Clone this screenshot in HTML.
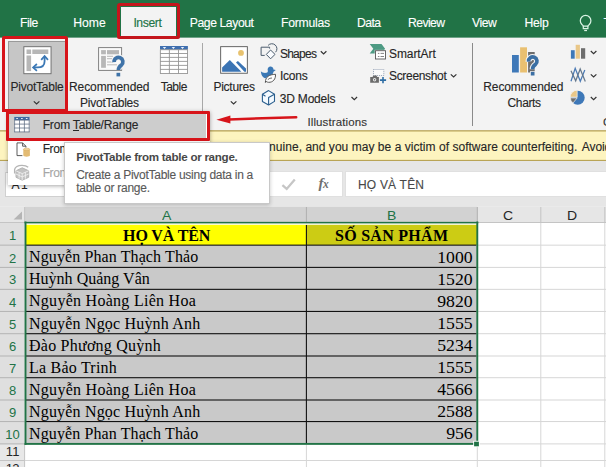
<!DOCTYPE html>
<html><head><meta charset="utf-8"><title>Excel</title>
<style>
html,body{margin:0;padding:0;}
body{width:606px;height:467px;overflow:hidden;position:relative;background:#e6e6e6;font-family:"Liberation Sans",sans-serif;}
.a{position:absolute;}
.t{position:absolute;white-space:nowrap;line-height:1;-webkit-text-stroke:0.12px currentColor;}
</style></head><body>
<!-- ===== title/tab strip ===== -->
<div class="a" style="left:0;top:0;width:606px;height:37px;background:#217346;"></div>
<div class="a" id="greenedge" style="left:0;top:37px;width:606px;height:1px;background:#6ea287;"></div>
<!-- ribbon body -->
<div class="a" style="left:0;top:38px;width:606px;height:93px;background:#f3f3f3;"></div>
<!-- Insert tab (active) -->
<div class="a" style="left:121px;top:7px;width:55px;height:31px;background:#f3f3f3;"></div>
<!-- lightbulb -->
<svg class="a" style="left:576px;top:10px;" width="20" height="24" viewBox="576 10 20 24" fill="none" stroke="#d9f2e3" stroke-width="1.25">
 <path d="M583.300 26.300C583.200 25.600 582.600 25.200 581.900 24.500A5.300 5.300 0 1 1 589.300 24.500C588.600 25.200 588 25.600 587.900 26.300"/>
 <path d="M583.300 26.200H587.900V28.700H583.300z"/>
 <path d="M584.200 30.500H587"/>
</svg>
<!-- group separators -->
<div class="a" style="left:202px;top:43px;width:1px;height:83px;background:#a8a8a8;"></div>
<div class="a" style="left:472px;top:43px;width:1px;height:83px;background:#8a8a8a;"></div>

<!-- PivotTable pressed button bg -->
<div class="a" style="left:8px;top:41px;width:57px;height:68px;background:#c6c6c6;box-shadow:inset 1px 1px 0 #999;"></div>

<!-- ICONS -->
<svg class="a" style="left:0;top:36px;" width="606" height="95" viewBox="0 36 606 95">
<!-- PivotTable icon -->
<g transform="translate(18.400,42.400)">
 <rect x="5.45" y="4.3" width="27.2" height="27" fill="#fff" stroke="#6e6e6e" stroke-width="0.95"/>
 <rect x="8.1" y="7.1" width="4.6" height="4.5" fill="#b7b7b7"/>
 <rect x="13.9" y="7.1" width="16" height="4.5" fill="#b7b7b7"/>
 <rect x="8.1" y="13.1" width="4.6" height="15.6" fill="#b7b7b7"/>
 <path d="M26.200 14.400V18.800C26.200 23.300 23.600 25 19.200 25H15.200" fill="none" stroke="#3b78b5" stroke-width="1.800"/>
 <path d="M22.800 17.400L26.200 13.700L29.600 17.400" fill="none" stroke="#3b78b5" stroke-width="1.700"/>
 <path d="M18.500 21.600L14.700 25L18.500 28.400" fill="none" stroke="#3b78b5" stroke-width="1.700"/>
</g>
<!-- Recommended PivotTables icon -->
<g transform="translate(92,42)">
 <rect x="6.6" y="5.6" width="23" height="22.8" fill="#fafafa" stroke="#7d7d7d" stroke-width="0.95"/>
 <rect x="9.1" y="8.1" width="4.8" height="4.2" fill="#b7b7b7"/>
 <rect x="15" y="8.1" width="12" height="4.2" fill="#b7b7b7"/>
 <rect x="9.1" y="13.9" width="4.8" height="11.9" fill="#b7b7b7"/>
 <path d="M15 14.300h6M15 16.700h5M15 20h6M15 22.800h10" stroke="#a8a8a8" stroke-width="0.800" fill="none"/>
 <g transform="translate(-0.200,0.700)">
 <g fill="none" stroke="#f3f3f3" stroke-width="5.800"><path d="M22.300 19.400A4.400 4.400 0 1 1 29.600 22.400Q26.600 24.400 26.600 27.400"/></g>
 <rect x="23.9" y="29.5" width="5.4" height="5.200" fill="#f3f3f3"/>
 <path d="M22.300 19.400A4.400 4.400 0 1 1 29.600 22.400Q26.600 24.400 26.600 27.400" fill="none" stroke="#3f73a8" stroke-width="3.700"/>
 <rect x="24.700" y="30.100" width="3.700" height="3.600" fill="#3f73a8"/>
 </g>
</g>
<!-- Table icon -->
<g transform="translate(154,42)">
 <rect x="6" y="4" width="27.9" height="27.7" fill="#fff"/>
 <rect x="6" y="4" width="27.9" height="3.7" fill="#3f6faf"/>
 <path d="M8.800 5.100h3.400l-1.700 2zM17.700 5.100h3.400l-1.700 2zM26.800 5.100h3.400l-1.700 2z" fill="#eaf4ff"/>
 <path d="M6 7.700h27.900M6 11.500h27.900M6 15.400h27.900M6 19.400h27.900M6 23.400h27.900M6 27.400h27.900M6 31.500h27.900M6.400 7.700v24M15.400 7.700v24M24.500 7.700v24M33.500 7.700v24" stroke="#959595" stroke-width="0.900" fill="none"/>
</g>
<!-- Pictures icon -->
<g transform="translate(214,42)">
 <rect x="6.65" y="4.65" width="26.7" height="26.6" fill="#fff" stroke="#5e5e5e" stroke-width="0.95"/>
 <circle cx="27" cy="10.9" r="2.9" fill="#e8c26e"/>
 <path d="M8.100 29.700V25.400L15.800 18.100L27.400 29.700z" fill="#3b74b4"/>
 <path d="M22 20.400L23.900 18.900L32 26.600V29.700H30.400z" fill="#3b74b4"/>
</g>
<!-- Shapes icon -->
<g transform="translate(256,40)" fill="none" stroke="#4a5b6c" stroke-width="1">
 <path d="M8.700 15.400H5.100V7.200H13.600V8.600"/>
 <path d="M12.100 5.400A4.600 4.600 0 1 1 19.600 12.200"/>
 <path d="M14.600 10L19 14.400L14.600 18.800L10.300 14.400z" fill="#fafcff"/>
</g>
<!-- Icons icon (duck + leaf) -->
<g transform="translate(256,62)">
 <path d="M4.900 9.300C6 10.600 8.200 11.100 10.400 10.800C11.700 10.500 12 9.500 11.800 8.400A2.900 2.900 0 1 1 17.400 7.600L19.800 8.100L17.500 9.700C17.200 12 15.500 13.500 13 14.500L9.500 16.300C6.800 15.800 5 13 4.900 9.300z" fill="#3b78b5"/>
 <path d="M9.400 20.500C9.300 15 13 12.500 19.500 12.300C19.900 17 17 20.600 12.500 20.300C11 20.200 10.200 19.600 9.900 19z" fill="#fdfdfd" stroke="#4a4a4a" stroke-width="0.900"/>
 <path d="M11.800 17.600Q13.800 15.800 16 16" fill="none" stroke="#4a4a4a" stroke-width="0.800"/>
</g>
<!-- 3D Models icon -->
<g transform="translate(256,86)" fill="none" stroke="#2b5f8e" stroke-width="1.100" stroke-linejoin="round">
 <path d="M12.600 4.600L18.500 8.200V15.400L12.600 19L6.400 15.400V8.200z" fill="#f4faff"/>
 <path d="M12.600 19V11.600L18.500 8.200M6.400 8.200L9.500 10.200"/>
</g>
<!-- SmartArt icon -->
<g transform="translate(364,40)">
 <path d="M5.700 4.100H17.500L21.100 8.700L17.500 13.400H5.700L9.300 8.700z" fill="#4d9a83"/>
 <rect x="10.700" y="9.900" width="11.500" height="9.800" fill="#f3f3f3"/>
 <rect x="11.500" y="10.700" width="10" height="8.300" fill="#fff" stroke="#555" stroke-width="0.900"/>
 <path d="M13.900 13.400h1.500M16.500 13.400h3.500M13.900 16.500h1.500M16.500 16.500h3.500" stroke="#777" stroke-width="0.900"/>
</g>
<!-- Screenshot icon -->
<g transform="translate(364,40)">
 <rect x="9.500" y="29.500" width="10.300" height="6" fill="#fafafa" stroke="#8c9bb0" stroke-width="0.900" stroke-dasharray="1 1"/>
 <path d="M6.200 36.900h2.300l0.900-1.400h3l0.900 1.400h1.600v5.800H6.200z" fill="#6b6b6b"/>
 <circle cx="10.600" cy="39.700" r="1.700" fill="#e6e6e6"/>
 <circle cx="10.600" cy="39.700" r="0.700" fill="#6b6b6b"/>
 <path d="M19 37v6.200M15.900 40.100h6.200" stroke="#2e6da4" stroke-width="1.600" fill="none"/>
</g>
<!-- Recommended Charts icon -->
<g transform="translate(506,40)">
 <rect x="6" y="15" width="6.800" height="17.500" fill="#3e78b8"/>
 <rect x="14.100" y="7.300" width="6.900" height="25.200" fill="#e9c071"/>
 <rect x="22.100" y="12" width="6.600" height="20.500" fill="#6d6d6d"/>
 <g fill="none" stroke="#f3f3f3" stroke-width="6"><path d="M22.600 21.600A4.200 4.200 0 1 1 29.500 24.400Q26.600 26.300 26.600 29.300"/></g>
 <rect x="24" y="31.200" width="5.200" height="5.200" fill="#f3f3f3"/>
 <path d="M22.600 21.600A4.200 4.200 0 1 1 29.500 24.400Q26.600 26.300 26.600 29.300" fill="none" stroke="#3b6fa3" stroke-width="3.700"/>
 <rect x="24.800" y="31.900" width="3.700" height="3.600" fill="#3b6fa3"/>
</g>
<!-- small chart icons -->
<g transform="translate(566,40)">
 <rect x="4.900" y="10.200" width="3.800" height="8.500" fill="#3e78b8"/>
 <rect x="9.700" y="4.800" width="4.200" height="13.900" fill="#e9c788"/>
 <rect x="15" y="8.200" width="4.200" height="10.500" fill="#6d6d6d"/>
 <path d="M5 41.200L9.200 28.300L14.300 41.200L18.800 30" fill="none" stroke="#4a7ab5" stroke-width="1.250"/>
 <path d="M5 30.700L9.700 40.800L14.200 29L19.300 41.400" fill="none" stroke="#66788c" stroke-width="1.250"/>
 <circle cx="11.700" cy="57.700" r="7" fill="#3e78b8"/>
 <path d="M11.200 57.200V50.200A7 7 0 0 0 4.200 57.200z" fill="#e9c788" stroke="#f3f3f3" stroke-width="0.700"/>
 <path d="M11.200 57.900H4.300A7 7 0 0 0 7 63z" fill="#6d6d6d" stroke="#f3f3f3" stroke-width="0.700"/>
</g>
<!-- chevrons -->
<g fill="none" stroke="#333" stroke-width="1.200">
 <path d="M33.800 101.400l2.800 2.600l2.800-2.600"/>
 <path d="M230.800 101.400l2.800 2.600l2.800-2.600"/>
 <path d="M320.800 51.300l2.800 2.600l2.800-2.600"/>
 <path d="M351.500 97l2.800 2.600l2.800-2.600"/>
 <path d="M450.800 74.400l2.800 2.600l2.800-2.600"/>
 <path d="M590.800 51l2.800 2.600l2.800-2.600"/>
 <path d="M590.800 74.400l2.800 2.600l2.800-2.600"/>
 <path d="M590.800 97l2.800 2.600l2.800-2.600"/>
</g>
</svg>
<!-- /ICONS -->
<!-- ===== message bar (yellow) ===== -->
<svg class="a" style="left:0;top:129px;" width="606" height="34" viewBox="0 129 606 34">
 <rect x="0" y="130.2" width="606" height="31" fill="#b9a455"/>
 <rect x="0" y="131.5" width="606" height="28.35" fill="#fdf4bf"/>
</svg>
<!-- ===== formula bar ===== -->
<div class="a" style="left:0;top:161px;width:606px;height:46px;background:#e6e6e6;"></div>
<div class="a" style="left:5.4px;top:171.5px;width:150px;height:25px;background:#fff;border:1px solid #d0d0d0;box-sizing:border-box;"></div>
<div class="a" style="left:160px;top:171px;width:183.4px;height:26px;background:#fff;box-shadow:inset 0 0 0 1px #e0e0e0;"></div>
<div class="a" style="left:345px;top:171px;width:264px;height:26px;background:#fff;box-shadow:inset 0 0 0 1px #e0e0e0;"></div>
<!-- checkmark -->
<svg class="a" style="left:279px;top:176px;" width="18" height="16" viewBox="279 176 18 16"><path d="M282.400 185.200l4.300 3.700L294.800 179.600" fill="none" stroke="#c6c6c6" stroke-width="2.300"/></svg>
<!-- fx -->
<div class="t" style="left:318.4px;top:175.600px;font-family:'Liberation Serif',serif;font-style:italic;font-weight:bold;font-size:15px;color:#707070;-webkit-text-stroke:0;letter-spacing:-0.300px;">f<span style="font-size:11.500px;">x</span></div>

<!-- ===== sheet ===== -->
<svg class="a" style="left:0;top:200px;" width="606" height="267" viewBox="0 200 606 267">
<rect x="0.00" y="206.80" width="606.00" height="261.00" fill="#ffffff"/>
<rect x="0.00" y="206.80" width="606.00" height="16.20" fill="#e6e6e6"/>
<rect x="25.00" y="206.80" width="452.30" height="16.20" fill="#d2d2d2"/>
<rect x="0.00" y="223.00" width="24.60" height="244.00" fill="#e8e8e8"/>
<rect x="0.00" y="223.00" width="24.60" height="220.90" fill="#dfdfdf"/>
<path d="M22 211.600V219.400H13.600z" fill="#b4b4b4"/>
<rect x="24.10" y="207.00" width="1.00" height="16.00" fill="#c4c4c4"/>
<rect x="305.90" y="207.00" width="1.00" height="16.00" fill="#b0b0b0"/>
<rect x="476.80" y="207.00" width="1.00" height="16.00" fill="#b0b0b0"/>
<rect x="540.30" y="207.00" width="1.00" height="16.00" fill="#c4c4c4"/>
<rect x="604.30" y="207.00" width="1.00" height="16.00" fill="#c4c4c4"/>
<rect x="477.30" y="222.00" width="129.00" height="1.00" fill="#c4c4c4"/>
<rect x="0.00" y="222.00" width="24.60" height="1.00" fill="#c4c4c4"/>
<rect x="0.00" y="244.65" width="24.60" height="1.00" fill="#b4b4b4"/>
<rect x="0.00" y="266.90" width="24.60" height="1.00" fill="#b4b4b4"/>
<rect x="0.00" y="288.85" width="24.60" height="1.00" fill="#b4b4b4"/>
<rect x="0.00" y="310.95" width="24.60" height="1.00" fill="#b4b4b4"/>
<rect x="0.00" y="333.20" width="24.60" height="1.00" fill="#b4b4b4"/>
<rect x="0.00" y="355.50" width="24.60" height="1.00" fill="#b4b4b4"/>
<rect x="0.00" y="377.20" width="24.60" height="1.00" fill="#b4b4b4"/>
<rect x="0.00" y="399.50" width="24.60" height="1.00" fill="#b4b4b4"/>
<rect x="0.00" y="421.05" width="24.60" height="1.00" fill="#b4b4b4"/>
<rect x="0.00" y="443.40" width="24.60" height="1.00" fill="#b4b4b4"/>
<rect x="0.00" y="460.00" width="24.60" height="1.00" fill="#c4c4c4"/>
<rect x="24.10" y="443.90" width="1.00" height="30.00" fill="#c4c4c4"/>
<rect x="478.00" y="244.65" width="128.00" height="1.00" fill="#d6d6d6"/>
<rect x="478.00" y="266.90" width="128.00" height="1.00" fill="#d6d6d6"/>
<rect x="478.00" y="288.85" width="128.00" height="1.00" fill="#d6d6d6"/>
<rect x="478.00" y="310.95" width="128.00" height="1.00" fill="#d6d6d6"/>
<rect x="478.00" y="333.20" width="128.00" height="1.00" fill="#d6d6d6"/>
<rect x="478.00" y="355.50" width="128.00" height="1.00" fill="#d6d6d6"/>
<rect x="478.00" y="377.20" width="128.00" height="1.00" fill="#d6d6d6"/>
<rect x="478.00" y="399.50" width="128.00" height="1.00" fill="#d6d6d6"/>
<rect x="478.00" y="421.05" width="128.00" height="1.00" fill="#d6d6d6"/>
<rect x="478.00" y="443.40" width="128.00" height="1.00" fill="#d6d6d6"/>
<rect x="25.00" y="460.00" width="581.00" height="1.00" fill="#d6d6d6"/>
<rect x="305.90" y="444.90" width="1.00" height="30.00" fill="#d6d6d6"/>
<rect x="476.80" y="444.90" width="1.00" height="30.00" fill="#d6d6d6"/>
<rect x="540.30" y="223.00" width="1.00" height="244.00" fill="#d6d6d6"/>
<rect x="604.30" y="223.00" width="1.00" height="244.00" fill="#d6d6d6"/>
<rect x="25.50" y="224.50" width="280.90" height="20.65" fill="#ffff00"/>
<rect x="306.40" y="224.50" width="170.90" height="20.65" fill="#cccc14"/>
<rect x="25.50" y="245.15" width="451.80" height="198.75" fill="#c9c9c9"/>
<rect x="26.00" y="244.60" width="450.50" height="1.10" fill="#111111"/>
<rect x="26.00" y="266.85" width="450.50" height="1.10" fill="#111111"/>
<rect x="26.00" y="288.80" width="450.50" height="1.10" fill="#111111"/>
<rect x="26.00" y="310.90" width="450.50" height="1.10" fill="#111111"/>
<rect x="26.00" y="333.15" width="450.50" height="1.10" fill="#111111"/>
<rect x="26.00" y="355.45" width="450.50" height="1.10" fill="#111111"/>
<rect x="26.00" y="377.15" width="450.50" height="1.10" fill="#111111"/>
<rect x="26.00" y="399.45" width="450.50" height="1.10" fill="#111111"/>
<rect x="26.00" y="421.00" width="450.50" height="1.10" fill="#111111"/>
<rect x="305.85" y="224.90" width="1.10" height="219.00" fill="#111111"/>
<rect x="26.50" y="223.30" width="449.80" height="1.40" fill="#fbfbe8"/>
<rect x="24.55" y="221.50" width="1.90" height="223.35" fill="#217346"/>
<rect x="476.35" y="221.50" width="1.90" height="223.35" fill="#217346"/>
<rect x="24.55" y="442.95" width="453.70" height="1.90" fill="#217346"/>
<rect x="24.55" y="221.85" width="453.70" height="1.55" fill="#217346"/>
<rect x="473.20" y="440.80" width="6.60" height="6.40" fill="#ffffff"/>
<rect x="474.10" y="441.70" width="4.80" height="4.60" fill="#217346"/>
</svg>
<div class="t" id="t0" style="left:20.00px;top:16.67px;font-size:12.20px;color:#ffffff;font-family:'Liberation Sans', sans-serif;font-weight:normal;letter-spacing:-0.480px;">File</div>
<div class="t" id="t1" style="left:73.20px;top:16.67px;font-size:12.20px;color:#ffffff;font-family:'Liberation Sans', sans-serif;font-weight:normal;letter-spacing:0.028px;">Home</div>
<div class="t" id="t2" style="left:133.40px;top:16.67px;font-size:12.20px;color:#217346;font-family:'Liberation Sans', sans-serif;font-weight:normal;letter-spacing:-0.417px;">Insert</div>
<div class="t" id="t3" style="left:189.80px;top:16.67px;font-size:12.20px;color:#ffffff;font-family:'Liberation Sans', sans-serif;font-weight:normal;letter-spacing:-0.425px;">Page Layout</div>
<div class="t" id="t4" style="left:281.00px;top:16.67px;font-size:12.20px;color:#ffffff;font-family:'Liberation Sans', sans-serif;font-weight:normal;letter-spacing:-0.257px;">Formulas</div>
<div class="t" id="t5" style="left:357.00px;top:16.67px;font-size:12.20px;color:#ffffff;font-family:'Liberation Sans', sans-serif;font-weight:normal;letter-spacing:-0.583px;">Data</div>
<div class="t" id="t6" style="left:408.00px;top:16.67px;font-size:12.20px;color:#ffffff;font-family:'Liberation Sans', sans-serif;font-weight:normal;letter-spacing:-0.594px;">Review</div>
<div class="t" id="t7" style="left:472.00px;top:16.67px;font-size:12.20px;color:#ffffff;font-family:'Liberation Sans', sans-serif;font-weight:normal;letter-spacing:-0.468px;">View</div>
<div class="t" id="t8" style="left:524.60px;top:16.67px;font-size:12.20px;color:#ffffff;font-family:'Liberation Sans', sans-serif;font-weight:normal;letter-spacing:-0.293px;">Help</div>
<div class="t" id="t9" style="left:603.50px;top:16.67px;font-size:12.20px;color:#ffffff;font-family:'Liberation Sans', sans-serif;font-weight:normal;letter-spacing:0.000px;">T</div>
<div class="t" id="t10" style="left:10.50px;top:81.34px;font-size:12.00px;color:#262626;font-family:'Liberation Sans', sans-serif;font-weight:normal;letter-spacing:-0.231px;">PivotTable</div>
<div class="t" id="t11" style="left:69.00px;top:81.34px;font-size:12.00px;color:#262626;font-family:'Liberation Sans', sans-serif;font-weight:normal;letter-spacing:-0.087px;">Recommended</div>
<div class="t" id="t12" style="left:80.00px;top:97.14px;font-size:12.00px;color:#262626;font-family:'Liberation Sans', sans-serif;font-weight:normal;letter-spacing:-0.237px;">PivotTables</div>
<div class="t" id="t13" style="left:160.70px;top:81.34px;font-size:12.00px;color:#262626;font-family:'Liberation Sans', sans-serif;font-weight:normal;letter-spacing:-0.497px;">Table</div>
<div class="t" id="t14" style="left:213.40px;top:81.34px;font-size:12.00px;color:#262626;font-family:'Liberation Sans', sans-serif;font-weight:normal;letter-spacing:-0.251px;">Pictures</div>
<div class="t" id="t15" style="left:279.90px;top:47.84px;font-size:12.00px;color:#262626;font-family:'Liberation Sans', sans-serif;font-weight:normal;letter-spacing:-0.741px;">Shapes</div>
<div class="t" id="t16" style="left:279.90px;top:70.14px;font-size:12.00px;color:#262626;font-family:'Liberation Sans', sans-serif;font-weight:normal;letter-spacing:-0.197px;">Icons</div>
<div class="t" id="t17" style="left:279.70px;top:93.24px;font-size:12.00px;color:#262626;font-family:'Liberation Sans', sans-serif;font-weight:normal;letter-spacing:-0.182px;">3D Models</div>
<div class="t" id="t18" style="left:389.00px;top:47.84px;font-size:12.00px;color:#262626;font-family:'Liberation Sans', sans-serif;font-weight:normal;letter-spacing:-0.078px;">SmartArt</div>
<div class="t" id="t19" style="left:389.00px;top:70.44px;font-size:12.00px;color:#262626;font-family:'Liberation Sans', sans-serif;font-weight:normal;letter-spacing:-0.323px;">Screenshot</div>
<div class="t" id="t20" style="left:307.40px;top:116.87px;font-size:11.50px;color:#333333;font-family:'Liberation Sans', sans-serif;font-weight:normal;letter-spacing:0.119px;">Illustrations</div>
<div class="t" id="t21" style="left:483.30px;top:81.44px;font-size:12.00px;color:#262626;font-family:'Liberation Sans', sans-serif;font-weight:normal;letter-spacing:-0.118px;">Recommended</div>
<div class="t" id="t22" style="left:507.60px;top:97.24px;font-size:12.00px;color:#262626;font-family:'Liberation Sans', sans-serif;font-weight:normal;letter-spacing:-0.389px;">Charts</div>
<div class="t" id="t23" style="left:603.00px;top:116.87px;font-size:11.50px;color:#333333;font-family:'Liberation Sans', sans-serif;font-weight:normal;letter-spacing:0.000px;">C</div>
<div class="t" id="t24" style="left:255.69px;top:141.14px;font-size:12.00px;color:#262626;font-family:'Liberation Sans', sans-serif;font-weight:normal;letter-spacing:0.035px;">genuine, and you may be a victim of software counterfeiting.</div>
<div class="t" id="t25" style="left:581.80px;top:141.14px;font-size:12.00px;color:#262626;font-family:'Liberation Sans', sans-serif;font-weight:normal;letter-spacing:-0.103px;">Avoid</div>
<div class="t" id="t26" style="left:11.50px;top:178.64px;font-size:12.00px;color:#262626;font-family:'Liberation Sans', sans-serif;font-weight:normal;letter-spacing:1.512px;">A1</div>
<div class="t" id="t27" style="left:358.00px;top:179.04px;font-size:12.00px;color:#484848;font-family:'Liberation Sans', sans-serif;font-weight:normal;letter-spacing:0.191px;">HỌ VÀ TÊN</div>
<div class="t" id="t28" style="left:161.98px;top:209.80px;font-size:12.40px;color:#217346;font-family:'Liberation Sans', sans-serif;font-weight:normal;transform:scaleX(1.1307);transform-origin:left center;-webkit-text-stroke:0;">A</div>
<div class="t" id="t29" style="left:386.93px;top:209.80px;font-size:12.40px;color:#217346;font-family:'Liberation Sans', sans-serif;font-weight:normal;transform:scaleX(1.1307);transform-origin:left center;-webkit-text-stroke:0;">B</div>
<div class="t" id="t30" style="left:503.04px;top:209.80px;font-size:12.40px;color:#262626;font-family:'Liberation Sans', sans-serif;font-weight:normal;transform:scaleX(1.1300);transform-origin:left center;-webkit-text-stroke:0;">C</div>
<div class="t" id="t31" style="left:567.14px;top:209.80px;font-size:12.40px;color:#262626;font-family:'Liberation Sans', sans-serif;font-weight:normal;transform:scaleX(1.1300);transform-origin:left center;-webkit-text-stroke:0;">D</div>
<div class="t" id="t32" style="left:8.98px;top:229.25px;font-size:13.00px;color:#217346;font-family:'Liberation Sans', sans-serif;font-weight:normal;letter-spacing:0.000px;-webkit-text-stroke:0;">1</div>
<div class="t" id="t33" style="left:8.98px;top:251.50px;font-size:13.00px;color:#217346;font-family:'Liberation Sans', sans-serif;font-weight:normal;letter-spacing:0.000px;-webkit-text-stroke:0;">2</div>
<div class="t" id="t34" style="left:8.98px;top:273.45px;font-size:13.00px;color:#217346;font-family:'Liberation Sans', sans-serif;font-weight:normal;letter-spacing:0.000px;-webkit-text-stroke:0;">3</div>
<div class="t" id="t35" style="left:8.98px;top:295.55px;font-size:13.00px;color:#217346;font-family:'Liberation Sans', sans-serif;font-weight:normal;letter-spacing:0.000px;-webkit-text-stroke:0;">4</div>
<div class="t" id="t36" style="left:8.98px;top:317.80px;font-size:13.00px;color:#217346;font-family:'Liberation Sans', sans-serif;font-weight:normal;letter-spacing:0.000px;-webkit-text-stroke:0;">5</div>
<div class="t" id="t37" style="left:8.98px;top:340.10px;font-size:13.00px;color:#217346;font-family:'Liberation Sans', sans-serif;font-weight:normal;letter-spacing:0.000px;-webkit-text-stroke:0;">6</div>
<div class="t" id="t38" style="left:8.98px;top:361.80px;font-size:13.00px;color:#217346;font-family:'Liberation Sans', sans-serif;font-weight:normal;letter-spacing:0.000px;-webkit-text-stroke:0;">7</div>
<div class="t" id="t39" style="left:8.98px;top:384.10px;font-size:13.00px;color:#217346;font-family:'Liberation Sans', sans-serif;font-weight:normal;letter-spacing:0.000px;-webkit-text-stroke:0;">8</div>
<div class="t" id="t40" style="left:8.98px;top:405.65px;font-size:13.00px;color:#217346;font-family:'Liberation Sans', sans-serif;font-weight:normal;letter-spacing:0.000px;-webkit-text-stroke:0;">9</div>
<div class="t" id="t41" style="left:5.37px;top:428.00px;font-size:13.00px;color:#217346;font-family:'Liberation Sans', sans-serif;font-weight:normal;letter-spacing:-0.009px;-webkit-text-stroke:0;">10</div>
<div class="t" id="t42" style="left:5.80px;top:445.00px;font-size:13.00px;color:#262626;font-family:'Liberation Sans', sans-serif;font-weight:normal;letter-spacing:0.300px;-webkit-text-stroke:0;">11</div>
<div class="t" id="t43" style="left:5.80px;top:462.00px;font-size:13.00px;color:#262626;font-family:'Liberation Sans', sans-serif;font-weight:normal;letter-spacing:-0.669px;-webkit-text-stroke:0;">12</div>
<div class="t" id="t44" style="left:123.10px;top:227.65px;font-size:16.00px;color:#000000;font-family:'Liberation Serif', serif;font-weight:bold;letter-spacing:-0.129px;-webkit-text-stroke:0;">HỌ VÀ TÊN</div>
<div class="t" id="t45" style="left:335.00px;top:227.65px;font-size:16.00px;color:#000000;font-family:'Liberation Serif', serif;font-weight:bold;letter-spacing:0.277px;-webkit-text-stroke:0;">SỐ SẢN PHẨM</div>
<div class="t" id="t46" style="left:29.00px;top:249.40px;font-size:16.00px;color:#000000;font-family:'Liberation Serif', serif;font-weight:normal;letter-spacing:0.108px;-webkit-text-stroke:0;">Nguyễn Phan Thạch Thảo</div>
<div class="t" id="t47" style="right:133.30px;top:249.57px;font-size:15.80px;color:#000000;font-family:'Liberation Serif', serif;font-weight:normal;transform:scaleX(1.1205);transform-origin:right center;-webkit-text-stroke:0;">1000</div>
<div class="t" id="t48" style="left:29.00px;top:271.35px;font-size:16.00px;color:#000000;font-family:'Liberation Serif', serif;font-weight:normal;letter-spacing:0.016px;-webkit-text-stroke:0;">Huỳnh Quảng Vân</div>
<div class="t" id="t49" style="right:133.30px;top:271.52px;font-size:15.80px;color:#000000;font-family:'Liberation Serif', serif;font-weight:normal;transform:scaleX(1.1205);transform-origin:right center;-webkit-text-stroke:0;">1520</div>
<div class="t" id="t50" style="left:29.00px;top:293.45px;font-size:16.00px;color:#000000;font-family:'Liberation Serif', serif;font-weight:normal;letter-spacing:0.275px;-webkit-text-stroke:0;">Nguyễn Hoàng Liên Hoa</div>
<div class="t" id="t51" style="right:133.30px;top:293.62px;font-size:15.80px;color:#000000;font-family:'Liberation Serif', serif;font-weight:normal;transform:scaleX(1.1205);transform-origin:right center;-webkit-text-stroke:0;">9820</div>
<div class="t" id="t52" style="left:29.00px;top:315.70px;font-size:16.00px;color:#000000;font-family:'Liberation Serif', serif;font-weight:normal;letter-spacing:0.183px;-webkit-text-stroke:0;">Nguyễn Ngọc Huỳnh Anh</div>
<div class="t" id="t53" style="right:133.30px;top:315.87px;font-size:15.80px;color:#000000;font-family:'Liberation Serif', serif;font-weight:normal;transform:scaleX(1.1205);transform-origin:right center;-webkit-text-stroke:0;">1555</div>
<div class="t" id="t54" style="left:29.00px;top:338.00px;font-size:16.00px;color:#000000;font-family:'Liberation Serif', serif;font-weight:normal;letter-spacing:0.237px;-webkit-text-stroke:0;">Đào Phương Quỳnh</div>
<div class="t" id="t55" style="right:133.30px;top:338.17px;font-size:15.80px;color:#000000;font-family:'Liberation Serif', serif;font-weight:normal;transform:scaleX(1.1205);transform-origin:right center;-webkit-text-stroke:0;">5234</div>
<div class="t" id="t56" style="left:29.00px;top:359.70px;font-size:16.00px;color:#000000;font-family:'Liberation Serif', serif;font-weight:normal;letter-spacing:0.223px;-webkit-text-stroke:0;">La Bảo Trinh</div>
<div class="t" id="t57" style="right:133.30px;top:359.87px;font-size:15.80px;color:#000000;font-family:'Liberation Serif', serif;font-weight:normal;transform:scaleX(1.1205);transform-origin:right center;-webkit-text-stroke:0;">1555</div>
<div class="t" id="t58" style="left:29.00px;top:382.00px;font-size:16.00px;color:#000000;font-family:'Liberation Serif', serif;font-weight:normal;letter-spacing:0.275px;-webkit-text-stroke:0;">Nguyễn Hoàng Liên Hoa</div>
<div class="t" id="t59" style="right:133.30px;top:382.17px;font-size:15.80px;color:#000000;font-family:'Liberation Serif', serif;font-weight:normal;transform:scaleX(1.1205);transform-origin:right center;-webkit-text-stroke:0;">4566</div>
<div class="t" id="t60" style="left:29.00px;top:403.55px;font-size:16.00px;color:#000000;font-family:'Liberation Serif', serif;font-weight:normal;letter-spacing:0.183px;-webkit-text-stroke:0;">Nguyễn Ngọc Huỳnh Anh</div>
<div class="t" id="t61" style="right:133.30px;top:403.72px;font-size:15.80px;color:#000000;font-family:'Liberation Serif', serif;font-weight:normal;transform:scaleX(1.1205);transform-origin:right center;-webkit-text-stroke:0;">2588</div>
<div class="t" id="t62" style="left:29.00px;top:425.90px;font-size:16.00px;color:#000000;font-family:'Liberation Serif', serif;font-weight:normal;letter-spacing:0.108px;-webkit-text-stroke:0;">Nguyễn Phan Thạch Thảo</div>
<div class="t" id="t63" style="right:133.30px;top:426.07px;font-size:15.80px;color:#000000;font-family:'Liberation Serif', serif;font-weight:normal;transform:scaleX(1.1201);transform-origin:right center;-webkit-text-stroke:0;">956</div>
<!-- dropdown menu -->
<div class="a" style="left:8px;top:111px;width:202px;height:74.4px;background:#fff;box-shadow:0 1px 4px rgba(0,0,0,.35);"></div>
<div class="a" style="left:9px;top:114px;width:197px;height:23.500px;background:#cdcdcd;"></div>
<svg class="a" style="left:8px;top:112px;" width="30" height="72" viewBox="0 0 30 72">
 <!-- table icon -->
 <rect x="6.2" y="4.9" width="15.4" height="15.1" fill="#fff"/>
 <rect x="6.2" y="4.9" width="15.4" height="3.2" fill="#3d6aa2"/>
 <path d="M8.300 6.500h1.600M13.100 6.500h1.600M17.900 6.500h1.600" stroke="#fff" stroke-width="0.900"/>
 <path d="M6.200 8.100h15.400M6.200 12.100h15.400M6.200 16h15.400M6.200 19.900h15.400M6.600 8.100v12M11.500 8.100v12M16.400 8.100v12M21.200 8.100v12" stroke="#5c6b80" stroke-width="0.750" fill="none"/>
 <!-- doc + db icon -->
 <path d="M9 30.900H14.600L17.900 34.200V43.600H9z" fill="#fff" stroke="#4a4a4a" stroke-width="0.900"/>
 <path d="M14.600 30.900V34.200H17.900" fill="none" stroke="#4a4a4a" stroke-width="0.900"/>
 <rect x="14.400" y="35.600" width="8.400" height="9.600" fill="#fff"/>
 <path d="M15.300 37.300v6.200c0 .7 1.500 1.200 3.300 1.200s3.300-.5 3.300-1.200v-6.200z" fill="#e3bb73"/>
 <ellipse cx="18.600" cy="37.300" rx="3.300" ry="1.150" fill="#efd198" stroke="#d6a95a" stroke-width="0.500"/>
 <!-- disabled cube icon -->
 <g fill="none" stroke="#b5b5b5" stroke-width="1">
  <path d="M6.600 61.500V57.500C7.200 54.700 10.500 53.300 14 53.300C16.500 53.300 18.800 54 20.200 55.300" stroke-width="1.300"/>
  <path d="M14.200 55.800L20.700 58.800V65.300L14.200 68.200L8 65.300V58.800z" fill="#c2c2c2"/>
  <path d="M14.200 68.200V61.600L20.700 58.800M14.200 61.600L8 58.800M11.100 60.200v6.500M17.400 60.200v6.500M8 62l6.200 2.900l6.500-2.900" stroke="#f4f4f4" stroke-width="0.800"/>
 </g>
</svg>
<!-- red highlight boxes -->
<div class="a" style="left:117px;top:3px;width:63.1px;height:35.6px;border:3.2px solid #c4161c;border-radius:3px 3px 2px 2px;box-sizing:border-box;"></div>
<div class="a" style="left:2px;top:35.6px;width:65.9px;height:76px;border:3px solid #d7141a;border-radius:2px 2px 0 0;box-sizing:border-box;"></div>
<div class="a" style="left:6px;top:111px;width:204.2px;height:29.700px;border:3px solid #d7141a;border-radius:1px;box-sizing:border-box;"></div>
<!-- red arrow -->
<svg class="a" style="left:214px;top:110px;" width="86" height="16" viewBox="0 0 86 16"><path d="M82.200 7.300L15 9.400" stroke="#d7141a" stroke-width="2.500" stroke-linecap="round" fill="none"/><path d="M2.400 9.700L16.400 5.500V13.400z" fill="#d7141a"/></svg>
<!-- T-underline --><div class="a" style="left:73.300px;top:130px;width:6px;height:1px;background:#262626;z-index:5;"></div>
<div class="t" id="t64" style="left:42.70px;top:119.34px;font-size:12.00px;color:#262626;font-family:'Liberation Sans', sans-serif;font-weight:normal;letter-spacing:-0.187px;">From Table/Range</div>
<div class="t" id="t65" style="left:42.70px;top:143.34px;font-size:12.00px;color:#262626;font-family:'Liberation Sans', sans-serif;font-weight:normal;letter-spacing:-0.400px;">From</div>
<div class="t" id="t66" style="left:42.70px;top:166.64px;font-size:12.00px;color:#a6a6a6;font-family:'Liberation Sans', sans-serif;font-weight:normal;letter-spacing:-0.400px;">From</div>
<div class="a" style="left:64px;top:142px;width:206px;height:62px;background:#fff;border:1px solid #c8c8c8;box-sizing:border-box;box-shadow:0 1px 4px rgba(0,0,0,.22);"></div>
<div class="t" id="t67" style="left:76.20px;top:150.58px;font-size:11.60px;color:#484848;font-family:'Liberation Sans', sans-serif;font-weight:bold;letter-spacing:-0.275px;-webkit-text-stroke:0;">PivotTable from table or range.</div>
<div class="t" id="t68" style="left:76.20px;top:168.64px;font-size:12.00px;color:#595959;font-family:'Liberation Sans', sans-serif;font-weight:normal;letter-spacing:-0.265px;">Create a PivotTable using data in a</div>
<div class="t" id="t69" style="left:76.20px;top:182.14px;font-size:12.00px;color:#595959;font-family:'Liberation Sans', sans-serif;font-weight:normal;letter-spacing:-0.256px;">table or range.</div>
</body></html>
